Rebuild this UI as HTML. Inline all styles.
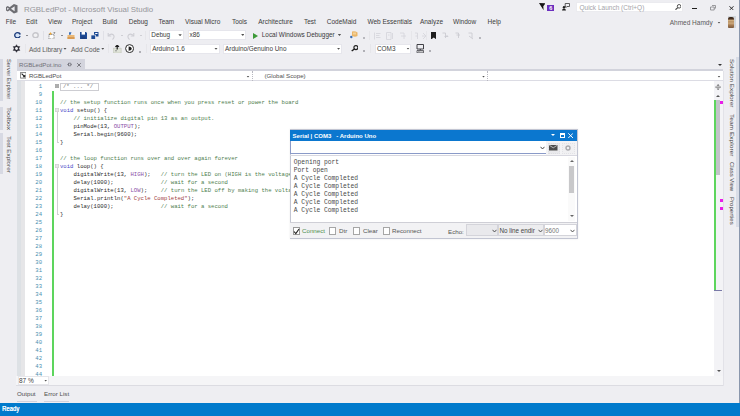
<!DOCTYPE html>
<html><head><meta charset="utf-8">
<style>
*{margin:0;padding:0;box-sizing:border-box}
html,body{width:740px;height:416px;overflow:hidden;background:#eeeef2;font-family:"Liberation Sans",sans-serif;position:relative}
.a{position:absolute}
.t{position:absolute;white-space:pre;line-height:1}
.menu{font-size:6.5px;color:#3c3c3c;top:19px}
.combo{position:absolute;background:#fff;border:1px solid #e6e6ec}
.dd{position:absolute;width:3.4px;height:2px;background:#505050;clip-path:polygon(0 0,100% 0,50% 100%)}
.vt{position:absolute;white-space:pre;line-height:1;font-size:5.8px;color:#484848;transform-origin:0 0;transform:rotate(90deg)}
.code{position:absolute;left:60px;font-family:"Liberation Mono",monospace;font-size:5.6px;line-height:8px;white-space:pre;color:#2a2a2a}
.ln{position:absolute;left:25px;width:17px;text-align:right;font-family:"Liberation Mono",monospace;font-size:5.6px;line-height:8px;color:#4a8fb0}
.c{color:#4d7d4d}.k{color:#4a4ac8}.s{color:#a04040}.m{color:#8a50a8}
</style></head><body>

<!-- title bar -->
<svg class="a" style="left:6px;top:4px" width="11.5" height="9.5" viewBox="0 0 16 16" preserveAspectRatio="none"><path d="M11 0 L16 2 V14 L11 16 L5 10.5 L2.5 12.5 L0 11 V5 L2.5 3.5 L5 5.5 Z M12 3.6 V12.4 L6.9 8 Z M1.6 5.8 V10.2 L4.2 8 Z" fill="#6e6e73" fill-rule="evenodd"/></svg>
<div class="t" style="left:24px;top:5.5px;font-size:7.9px;color:#96969b">RGBLedPot - Microsoft Visual Studio</div>

<!-- menu -->
<div class="t menu" style="left:5.7px">File</div>
<div class="t menu" style="left:26px">Edit</div>
<div class="t menu" style="left:48px">View</div>
<div class="t menu" style="left:72px">Project</div>
<div class="t menu" style="left:102.6px">Build</div>
<div class="t menu" style="left:128.8px">Debug</div>
<div class="t menu" style="left:158.4px">Team</div>
<div class="t menu" style="left:185px">Visual Micro</div>
<div class="t menu" style="left:231.9px">Tools</div>
<div class="t menu" style="left:258.2px">Architecture</div>
<div class="t menu" style="left:304px">Test</div>
<div class="t menu" style="left:326.8px">CodeMaid</div>
<div class="t menu" style="left:367.4px">Web Essentials</div>
<div class="t menu" style="left:419.9px">Analyze</div>
<div class="t menu" style="left:453px">Window</div>
<div class="t menu" style="left:487.6px">Help</div>


<!-- title right -->
<svg class="a" style="left:538.8px;top:3.2px" width="6.5" height="7.5" viewBox="0 0 6.5 7.5"><path d="M0 0 L6.5 0.4 L4.3 3.2 L4.6 7.3 L2.2 3.6 Z" fill="#141414"/></svg>
<div class="a" style="left:547px;top:4.9px;width:7.3px;height:6.5px;background:#6b2fbf"></div>
<div class="t" style="left:549.2px;top:5.6px;font-size:5.5px;color:#fff;font-weight:bold">6</div>
<svg class="a" style="left:562.4px;top:3.2px" width="8" height="7.5" viewBox="0 0 8 7.5"><path d="M3.2 0.5 H7.5 V3.5 H5 L4 4.5 V3.5 H3.2 Z" fill="none" stroke="#3a3a3a" stroke-width="0.8"/><circle cx="2" cy="4.2" r="1.2" fill="#1e1e1e"/><path d="M0 7.5 Q0.3 5.6 2 5.6 Q3.7 5.6 4 7.5 Z" fill="#1e1e1e"/></svg>
<div class="a" style="left:575.8px;top:1.6px;width:107.4px;height:10.6px;background:#fff;border:1px solid #ebebef"></div>
<div class="t" style="left:579.5px;top:5px;font-size:6.5px;color:#a4a4a9">Quick Launch (Ctrl+Q)</div>
<svg class="a" style="left:674.6px;top:3.8px" width="6.5" height="6" viewBox="0 0 6.5 6"><circle cx="4.1" cy="2.3" r="1.8" fill="none" stroke="#424242" stroke-width="0.9"/><path d="M2.8 3.6 L0.5 5.6" stroke="#424242" stroke-width="1.2"/></svg>
<div class="a" style="left:691.9px;top:7.7px;width:5px;height:1.8px;background:#1e1e1e"></div>
<svg class="a" style="left:709.5px;top:5px" width="6" height="5.5" viewBox="0 0 6 5.5"><path d="M2 0.5 H5.5 V3.2 H4.2 M0.5 2 H4.2 V5 H0.5 Z" fill="none" stroke="#8a8a8e" stroke-width="0.85"/></svg>
<svg class="a" style="left:728.6px;top:5.5px" width="5" height="4.5" viewBox="0 0 5 4.5"><path d="M0.3 0.2 L4.7 4.3 M4.7 0.2 L0.3 4.3" stroke="#1e1e1e" stroke-width="0.9"/></svg>
<div class="t" style="left:669.7px;top:19.8px;font-size:6.5px;color:#5a5a5a">Ahmed Hamdy</div>
<div class="dd" style="left:717.3px;top:21.5px"></div>
<div class="a" style="left:727.8px;top:16.3px;width:8.2px;height:11.5px;background:#d3d7dc"></div>
<div class="a" style="left:728.3px;top:17px;width:5.8px;height:10.8px;background:linear-gradient(#3a2818 0,#4a3020 18%,#d2b080 30%,#b58d60 45%,#d0ad80 55%,#a47a50 75%,#7a5a40 100%);border-radius:2px 2px 1px 1px"></div>
<div class="a" style="left:738.7px;top:0;width:1.3px;height:403px;background:#8a97ad"></div>

<!-- toolbar row 1 -->
<svg class="a" style="left:13.7px;top:31.6px" width="7.2" height="6.6" viewBox="0 0 7.2 6.6"><ellipse cx="3.5" cy="3.3" rx="2.8" ry="2.6" fill="#d6e4f8" stroke="#1a3a7a" stroke-width="1.3"/><path d="M4.4 3.3 L7.2 2.1 V4.5 Z" fill="#e4ecf8"/></svg>
<div class="a" style="left:25.5px;top:35px;width:2px;height:1.3px;background:#8a8a90"></div>
<svg class="a" style="left:32px;top:31.6px" width="7" height="6.6" viewBox="0 0 7 6.6"><ellipse cx="3.5" cy="3.3" rx="2.7" ry="2.5" fill="#f2f2f4" stroke="#c6c6cb" stroke-width="1.4"/></svg>
<div class="a" style="left:43px;top:31px;width:1px;height:9px;background:#e0e0e6"></div>
<svg class="a" style="left:48px;top:31.5px" width="8" height="7.5" viewBox="0 0 8 7.5"><path d="M1 2.5 H6 V7 H1 Z" fill="#fff" stroke="#666" stroke-width="0.8" stroke-dasharray="1 0.8"/><path d="M2.5 0 L3.2 1.3 L4.5 1.5 L3.2 2 L2.5 3.3 L1.8 2 L0.5 1.5 L1.8 1.3 Z" fill="#e9a63a"/><path d="M5.5 0.5 L7 0.5 L6 2" stroke="#777" stroke-width="0.7" fill="none"/></svg>
<div class="a" style="left:60.5px;top:35px;width:2px;height:1.3px;background:#8a8a90"></div>
<svg class="a" style="left:66.5px;top:31.5px" width="8" height="7.5" viewBox="0 0 8 7.5"><path d="M0.5 3 H7.5 V7.5 H0.5 Z" fill="#e9b877"/><path d="M2 0.3 L4.5 0.3 L3.5 2.8 L2 2.8 Z" fill="#3a6fb5"/><path d="M0.5 5 H7.5 V7.5 H0.5 Z" fill="#d99c55"/></svg>
<svg class="a" style="left:79.5px;top:32px" width="7" height="7" viewBox="0 0 7 7"><path d="M0 0 H6 L7 1 V7 H0 Z" fill="#1d4a94"/><path d="M1.6 0 H5 V2.6 H1.6 Z" fill="#fff"/><path d="M1.5 4.5 H5.5 V7 H1.5 Z" fill="#1d3f80"/></svg>
<svg class="a" style="left:91px;top:31.5px" width="7.5" height="7.5" viewBox="0 0 7.5 7.5"><path d="M3 0 H7.5 V4.5 H3 Z" fill="#1d4a94"/><path d="M0 3 H4.5 V7.5 H0 Z" fill="#1d4a94" stroke="#eeeef2" stroke-width="0.7"/><path d="M4.2 1 H6.5 V2 H4.2 Z" fill="#fff"/></svg>
<div class="a" style="left:103px;top:31px;width:1px;height:9px;background:#e0e0e6"></div>
<svg class="a" style="left:107px;top:31.5px" width="8" height="8" viewBox="0 0 8 8"><path d="M1.2 1 V4 H4.2" stroke="#cdcdd3" stroke-width="1.1" fill="none"/><path d="M1.5 3.8 Q4 1 6.5 3 Q8 5.5 5.5 7.5" stroke="#cdcdd3" stroke-width="1.1" fill="none"/></svg>
<div class="a" style="left:120.5px;top:35px;width:2px;height:1.3px;background:#cfcfd4"></div>
<svg class="a" style="left:127px;top:31.5px" width="8" height="8" viewBox="0 0 8 8"><path d="M6.8 1 V4 H3.8" stroke="#cdcdd3" stroke-width="1.1" fill="none"/><path d="M6.5 3.8 Q4 1 1.5 3 Q0 5.5 2.5 7.5" stroke="#cdcdd3" stroke-width="1.1" fill="none"/></svg>
<div class="a" style="left:139.5px;top:35px;width:2px;height:1.3px;background:#cfcfd4"></div>
<div class="a" style="left:145px;top:31px;width:1px;height:9px;background:#e6e6ea"></div>
<div class="combo" style="left:149px;top:29.7px;width:35px;height:10.2px"></div>
<div class="t" style="left:151.3px;top:32px;font-size:6.4px;color:#3a3a3a">Debug</div>
<div class="dd" style="left:178.4px;top:34.3px"></div>
<div class="combo" style="left:187.8px;top:29.7px;width:58.6px;height:10.2px"></div>
<div class="t" style="left:189.5px;top:32px;font-size:6.4px;color:#3a3a3a">x86</div>
<div class="dd" style="left:241.1px;top:34px"></div>
<svg class="a" style="left:252.5px;top:32.5px" width="5" height="6" viewBox="0 0 5 6"><path d="M0 0 L5 3 L0 6 Z" fill="#3c9a38"/></svg>
<div class="t" style="left:261.8px;top:32px;font-size:6.4px;color:#3a3a3a">Local Windows Debugger</div>
<div class="dd" style="left:337.8px;top:34px"></div>
<svg class="a" style="left:349.5px;top:31.2px" width="8" height="7.5" viewBox="0 0 8 7.5"><path d="M2 0.5 Q5 -0.5 7.5 1.5 V5 Q5 6.5 2 5 Z" fill="#eab66a"/><path d="M3 1.5 H6 V3.5 H3 Z" fill="#f3d29a"/><circle cx="1.3" cy="6" r="1.2" fill="#3a6fb5"/></svg>
<div class="a" style="left:362.5px;top:37.4px;width:2px;height:1.6px;background:#b8b8be"></div>
<div class="a" style="left:369px;top:31px;width:1px;height:9px;background:#e6e6ea"></div>
<svg class="a" style="left:373.5px;top:31.5px" width="34" height="8" viewBox="0 0 34 8"><path d="M0.5 0.5 V7.5 M2 1.5 H6.5 M2 3.5 H5.5 M2 5.5 H6.5 M12.5 0.5 H17 V7.5 H12.5 Z M18.5 1 V7 M14 3 H15.5 M26 1 H30 V7 M27 4 H32" stroke="#d6d6dc" stroke-width="0.9" fill="none"/></svg>
<div class="a" style="left:410.5px;top:31px;width:1px;height:9px;background:#e6e6ea"></div>
<svg class="a" style="left:414px;top:31.5px" width="14" height="8" viewBox="0 0 14 8"><path d="M1 1 H3.5 V7 M1.5 4 H3.5 M9 1 L12 4 L9 7 M8 4 H11" stroke="#d6d6dc" stroke-width="0.9" fill="none"/></svg>
<div class="a" style="left:426px;top:31px;width:1px;height:9px;background:#e6e6ea"></div>
<svg class="a" style="left:430.5px;top:31.5px" width="5.5" height="7.5" viewBox="0 0 5.5 7.5"><path d="M0 0 H5.5 V7.5 L2.75 5.5 L0 7.5 Z" fill="#1e1e1e"/></svg>
<svg class="a" style="left:442px;top:31.5px" width="34" height="8" viewBox="0 0 34 8"><path d="M0.5 1 H3.5 V6 M2.5 4.5 L6 4.5 L4.5 3 M13.5 1 H16.5 V6 M14.5 3 H18 M26.5 1 H30 V6 M27 4 L31 7" stroke="#cbcbd1" stroke-width="0.9" fill="none"/></svg>
<div class="a" style="left:478.5px;top:37.4px;width:2px;height:1.6px;background:#b8b8be"></div>

<!-- toolbar row 2 -->
<svg class="a" style="left:12px;top:44.2px" width="9" height="9" viewBox="0 0 9 9"><path d="M4.5 0.7 L7.8 6.4 H1.2 Z M4.5 8.3 L1.2 2.6 H7.8 Z" fill="#2a2a35" stroke="#2a2a35" stroke-width="0.5" stroke-linejoin="round"/><circle cx="4.5" cy="4.5" r="1.4" fill="#f4f4f7"/></svg>
<div class="a" style="left:24.5px;top:44px;width:1px;height:9px;background:#e6e6ea"></div>
<div class="t" style="left:29px;top:46.5px;font-size:6.5px;color:#595959">Add Library</div>
<div class="dd" style="left:63.3px;top:47.8px"></div>
<div class="t" style="left:71px;top:46.5px;font-size:6.5px;color:#595959">Add Code</div>
<div class="dd" style="left:101.1px;top:47.8px"></div>
<div class="a" style="left:108px;top:44px;width:1px;height:9px;background:#e6e6ea"></div>
<svg class="a" style="left:113.2px;top:44.8px" width="8.5" height="8" viewBox="0 0 8.5 8"><path d="M0.3 3.2 H8.2 V8 H0.3 Z" fill="#dfe3d8" stroke="#b8bdb0" stroke-width="0.5"/><path d="M4.2 0 V4.5 M2.4 1.9 L4.2 0.2 L6 1.9" stroke="#1e1e1e" stroke-width="1.2" fill="none"/><circle cx="3" cy="5.8" r="0.8" fill="#888"/></svg>
<svg class="a" style="left:124.7px;top:44px" width="9.2" height="9.2" viewBox="0 0 9.2 9.2"><circle cx="4.6" cy="4.6" r="4" fill="#fff" stroke="#2a2a2a" stroke-width="1"/><path d="M3.6 2.4 Q6.8 2.8 6.8 4.6 Q6.8 6.4 3.6 6.8 Z" fill="#1e1e1e"/></svg>
<div class="a" style="left:138.5px;top:51px;width:2px;height:1.6px;background:#b0b0b6"></div>
<div class="a" style="left:145.5px;top:44px;width:1px;height:9px;background:#e6e6ea"></div>
<div class="combo" style="left:150px;top:44.2px;width:69.5px;height:9.8px"></div>
<div class="t" style="left:152.2px;top:46.3px;font-size:6.4px;color:#3a3a3a">Arduino 1.6</div>
<div class="dd" style="left:214.3px;top:47.8px"></div>
<div class="combo" style="left:223px;top:44.2px;width:119px;height:9.8px"></div>
<div class="t" style="left:225px;top:46.3px;font-size:6.4px;color:#3a3a3a">Arduino/Genuino Uno</div>
<div class="dd" style="left:336.9px;top:47.8px"></div>
<svg class="a" style="left:350.9px;top:45.2px" width="7.5" height="6.5" viewBox="0 0 7.5 6.5"><circle cx="4.9" cy="2.6" r="2" fill="none" stroke="#1e1e1e" stroke-width="1.1"/><path d="M3.4 4 L0.7 6" stroke="#1e1e1e" stroke-width="1.5"/></svg>
<div class="a" style="left:362.8px;top:50.3px;width:2px;height:1.6px;background:#b0b0b6"></div>
<div class="a" style="left:370px;top:44px;width:1px;height:9px;background:#e6e6ea"></div>
<div class="combo" style="left:375px;top:44.2px;width:36px;height:9.8px"></div>
<div class="t" style="left:377px;top:46.3px;font-size:6.4px;color:#3a3a3a">COM3</div>
<div class="dd" style="left:406.3px;top:47.6px"></div>
<svg class="a" style="left:416px;top:44px" width="8.5" height="9" viewBox="0 0 8.5 9"><path d="M1 0.5 H7.5 V5 H1 Z" fill="none" stroke="#2d2d33" stroke-width="0.9"/><path d="M4.25 5 V6.3" stroke="#2d2d33" stroke-width="0.9"/><path d="M1 6.5 H7.5 V8.8 H1 Z" fill="#fff" stroke="#2d2d33" stroke-width="0.7"/><path d="M2 7.6 H6.5" stroke="#2d2d33" stroke-width="0.6" stroke-dasharray="0.8 0.5"/></svg>
<div class="a" style="left:428.8px;top:50.3px;width:2px;height:1.6px;background:#b0b0b6"></div>

<!-- left tab strip -->
<div class="a" style="left:0;top:59px;width:3px;height:42px;background:#d7d9e3"></div>
<div class="a" style="left:0;top:107px;width:3px;height:22.6px;background:#d7d9e3"></div>
<div class="a" style="left:0;top:133px;width:3px;height:41px;background:#d7d9e3"></div>
<div class="vt" style="left:11.1px;top:59px;transform:rotate(90deg) scaleX(1.0)">Server Explorer</div>
<div class="vt" style="left:11.1px;top:107.3px;transform:rotate(90deg) scaleX(1.155)">Toolbox</div>
<div class="vt" style="left:11.1px;top:136.4px;transform:rotate(90deg) scaleX(1.087)">Test Explorer</div>

<!-- right tab strip -->
<div class="a" style="left:735.5px;top:57px;width:3px;height:170px;background:#d9dde7"></div>
<div class="vt" style="left:734.3px;top:58.6px;transform:rotate(90deg) scaleX(1.096)">Solution Explorer</div>
<div class="vt" style="left:734.3px;top:113.7px;transform:rotate(90deg) scaleX(1.136)">Team Explorer</div>
<div class="vt" style="left:734.3px;top:161.6px;transform:rotate(90deg) scaleX(1.015)">Class View</div>
<div class="vt" style="left:734.3px;top:197.3px;transform:rotate(90deg) scaleX(1.048)">Properties</div>

<!-- document tab well -->
<div class="a" style="left:17px;top:59px;width:68px;height:10px;background:#d3d4dd"></div>
<div class="t" style="left:19px;top:62px;font-size:6.1px;color:#707078">RGBLedPot.ino</div>
<svg class="a" style="left:67.3px;top:62.3px" width="5" height="5" viewBox="0 0 5 5"><path d="M0.3 2.5 H1.5 M1.5 1 V4 M1.5 1.2 H3.8 V3.8 H1.5 M3.8 2.5 H4.8" stroke="#707078" stroke-width="0.8" fill="none"/></svg>
<svg class="a" style="left:77px;top:62.5px" width="4" height="4" viewBox="0 0 4 4"><path d="M0.2 0.2 L3.8 3.8 M3.8 0.2 L0.2 3.8" stroke="#6d6d73" stroke-width="0.9"/></svg>
<div class="a" style="left:717.5px;top:63.5px;width:0;height:0;border-left:2px solid transparent;border-right:2px solid transparent;border-top:2.2px solid #333"></div>
<div class="a" style="left:17px;top:69px;width:706px;height:1.6px;background:#d2d3dc"></div>

<!-- navigation bar -->
<div class="a" style="left:17px;top:71px;width:705.5px;height:10.3px;background:#fff;border-bottom:1px solid #dcdce4"></div>
<svg class="a" style="left:19.7px;top:72.4px" width="6.5" height="6.5" viewBox="0 0 6.5 6.5"><path d="M0.4 0.4 H6.1 V6.1 H0.4 Z" fill="#fff" stroke="#666" stroke-width="0.8"/><path d="M1.6 1.6 L4.4 4.4" stroke="#1e1e1e" stroke-width="1.1"/><path d="M3.2 4.8 H4.9 V3.1" stroke="#1e1e1e" stroke-width="1"/></svg>
<div class="t" style="left:28.9px;top:73.4px;font-size:6.1px;color:#505050">RGBLedPot</div>
<div class="dd" style="left:246.3px;top:75.5px"></div>
<div class="a" style="left:251.5px;top:71px;width:1px;height:10px;border-left:1px dotted #b8b8c0"></div>
<div class="t" style="left:264.4px;top:73.4px;font-size:6.2px;color:#505050">(Global Scope)</div>
<div class="dd" style="left:481.8px;top:75.5px"></div>
<div class="a" style="left:486.5px;top:71px;width:1px;height:10px;border-left:1px dotted #b8b8c0"></div>
<div class="dd" style="left:717.3px;top:75.5px"></div>

<!-- editor -->
<div class="a" style="left:16px;top:81px;width:698px;height:295px;background:#fff"></div>
<div class="a" style="left:16px;top:81px;width:1px;height:304px;background:#eeeef2"></div>
<div class="a" style="left:17px;top:81px;width:3.5px;height:295px;background:#dde1e5"></div>
<div class="a" style="left:20.5px;top:81px;width:4.8px;height:295px;background:#e6e6e8"></div>
<div class="ln" style="top:83px">1<br>9<br>10<br>11<br>12<br>13<br>14<br>15<br>16<br>17<br>18<br>19<br>20<br>21<br>22<br>23<br>24<br>25<br>26<br>27<br>28<br>29<br>30<br>31<br>32<br>33<br>34<br>35<br>36<br>37<br>38<br>39<br>40<br>41<br>42<br>43<br>44</div>
<div class="a" style="left:52px;top:90.5px;width:2px;height:285.5px;background:#5dd55d"></div>
<svg class="a" style="left:55.3px;top:84px" width="4" height="4" viewBox="0 0 4 4"><path d="M0.35 0.35 H3.65 V3.65 H0.35 Z M1 2 H3 M2 1 V3" stroke="#6a6a6a" stroke-width="0.65" fill="#fff"/></svg>
<div class="a" style="left:60.2px;top:82.8px;width:38.7px;height:7.8px;border:1px solid #cdcdd2"></div>
<div class="t" style="left:63px;top:84px;font-family:'Liberation Mono',monospace;font-size:5.6px;color:#777">/* ... */</div>
<svg class="a" style="left:55.3px;top:108px" width="4" height="4" viewBox="0 0 4 4"><path d="M0.35 0.35 H3.65 V3.65 H0.35 Z M1 2 H3" stroke="#b0b0b0" stroke-width="0.6" fill="#fff"/></svg>
<div class="a" style="left:57px;top:112px;width:2px;height:30.5px;border-left:1px solid #d0d0d4;border-bottom:1px solid #d0d0d4"></div>
<svg class="a" style="left:55.3px;top:164px" width="4" height="4" viewBox="0 0 4 4"><path d="M0.35 0.35 H3.65 V3.65 H0.35 Z M1 2 H3" stroke="#b0b0b0" stroke-width="0.6" fill="#fff"/></svg>
<div class="a" style="left:57px;top:168px;width:2px;height:46.5px;border-left:1px solid #d0d0d4;border-bottom:1px solid #d0d0d4"></div>
<div class="code" style="top:83px">

<span class="c">// the setup function runs once when you press reset or power the board</span>
<span class="k">void</span> setup() {
    <span class="c">// initialize digital pin 13 as an output.</span>
    pinMode(13, <span class="m">OUTPUT</span>);
    Serial.begin(9600);
}

<span class="c">// the loop function runs over and over again forever</span>
<span class="k">void</span> loop() {
    digitalWrite(13, <span class="m">HIGH</span>);   <span class="c">// turn the LED on (HIGH is the voltage level)</span>
    delay(1000);              <span class="c">// wait for a second</span>
    digitalWrite(13, <span class="m">LOW</span>);    <span class="c">// turn the LED off by making the voltage LOW</span>
    Serial.println(<span class="s">"A Cycle Completed"</span>);
    delay(1000);              <span class="c">// wait for a second</span>
}</div>

<!-- vertical scrollbar -->
<div class="a" style="left:713.5px;top:81.3px;width:9px;height:294.7px;background:#f3f3f6"></div>
<div class="a" style="left:722.5px;top:71px;width:1px;height:315px;background:#e2e2e8"></div>
<svg class="a" style="left:715px;top:83.8px" width="6.2" height="6.2" viewBox="0 0 6.2 6.2"><path d="M3.1 0 L4.6 1.8 H1.6 Z M3.1 6.2 L4.6 4.4 H1.6 Z" fill="#6a6a6a"/><path d="M0.3 3.1 H5.9" stroke="#6a6a6a" stroke-width="1"/></svg>
<div class="a" style="left:716px;top:94.9px;width:0;height:0;border-left:2px solid transparent;border-right:2px solid transparent;border-bottom:2.2px solid #555"></div>
<div class="a" style="left:714px;top:100.3px;width:2px;height:190px;background:#5dd55d"></div>
<div class="a" style="left:716px;top:100.3px;width:4.3px;height:74.7px;background:#c2c3c9"></div>
<div class="a" style="left:714px;top:290px;width:8px;height:1px;background:#7a7aa8"></div>
<div class="a" style="left:720px;top:100.5px;width:3px;height:3px;background:#e81ee8"></div>
<div class="a" style="left:720px;top:199px;width:3px;height:3px;background:#e81ee8"></div>
<div class="a" style="left:720px;top:207px;width:3px;height:3px;background:#e81ee8"></div>
<div class="a" style="left:716.5px;top:370px;width:0;height:0;border-left:2px solid transparent;border-right:2px solid transparent;border-top:2px solid #555"></div>

<!-- horizontal area -->
<div class="a" style="left:16px;top:376px;width:707px;height:9px;background:#f5f5f7"></div>
<div class="a" style="left:16px;top:385px;width:707px;height:1px;background:#dcdce2"></div>
<div class="a" style="left:17.5px;top:376px;width:31.5px;height:9px;background:#fff;border:1px solid #e6e6ea"></div>
<div class="t" style="left:19px;top:378px;font-size:6.5px;color:#444">87 %</div>
<div class="dd" style="left:44px;top:379.5px"></div>

<!-- output tabs -->
<div class="t" style="left:17px;top:390.8px;font-size:6.2px;color:#505050">Output</div>
<div class="a" style="left:17px;top:400.6px;width:20px;height:1px;background:#d0d2dc"></div>
<div class="t" style="left:44px;top:390.8px;font-size:6.2px;color:#505050">Error List</div>
<div class="a" style="left:44px;top:400.6px;width:25px;height:1px;background:#d0d2dc"></div>


<!-- serial monitor window -->
<div class="a" style="left:289.5px;top:128.8px;width:288px;height:110px;background:#fff;border:1px solid #c2c5d2;box-shadow:0 0 2px rgba(0,0,0,0.08)"></div>
<div class="a" style="left:290px;top:130px;width:287px;height:11px;background:#0b77cf"></div>
<div class="t" style="left:292.6px;top:133px;font-size:6px;font-weight:bold;color:#fff">Serial | COM3   - Arduino Uno</div>
<div class="a" style="left:551px;top:134.3px;width:0;height:0;border-left:2px solid transparent;border-right:2px solid transparent;border-top:2.3px solid #fff"></div>
<div class="a" style="left:559.5px;top:133px;width:5px;height:5.2px;border:1px solid #fff;border-top-width:2px"></div>
<svg class="a" style="left:568.2px;top:133px" width="5.3" height="5.3" viewBox="0 0 5.3 5.3"><path d="M0.3 0.3 L5 5 M5 0.3 L0.3 5" stroke="#fff" stroke-width="0.95"/></svg>
<!-- input row -->
<div class="a" style="left:290px;top:141px;width:256px;height:13px;background:#fff;border-bottom:1px solid #8a9ac8;border-left:1px solid #8a9ac8"></div>
<svg class="a" style="left:539.5px;top:145.5px" width="5" height="4" viewBox="0 0 5 4"><path d="M0.5 0.8 L2.5 3 L4.5 0.8" stroke="#333" stroke-width="0.9" fill="none"/></svg>
<div class="a" style="left:546px;top:141px;width:30.5px;height:14px;background:#f3f3f5"></div>
<div class="a" style="left:547.5px;top:142.5px;width:12.5px;height:11px;background:#e9e9ec;border:1px dotted #dedee2"></div>
<div class="a" style="left:561.5px;top:142.5px;width:13px;height:11px;background:#f0f0f2;border:1px dotted #e2e2e6"></div>
<svg class="a" style="left:549.3px;top:145px" width="8.5" height="5.5" viewBox="0 0 8.5 5.5"><path d="M0 0 H8.5 V5.5 H0 Z" fill="#4a4a4a"/><path d="M0.3 0.3 L4.25 2.8 L8.2 0.3" stroke="#cfcfcf" stroke-width="0.8" fill="none"/></svg>
<svg class="a" style="left:565px;top:145px" width="6" height="6" viewBox="0 0 6 6"><circle cx="3" cy="3" r="2" fill="none" stroke="#a8a8ac" stroke-width="1.4"/></svg>
<div class="a" style="left:290px;top:155px;width:287px;height:0.8px;background:#d8d8e0"></div>
<!-- output text -->
<div class="t" style="left:293.8px;top:159.8px;font-family:'Liberation Mono',monospace;font-size:6.3px;color:#484848">Opening port</div>
<div class="t" style="left:293.8px;top:167.9px;font-family:'Liberation Mono',monospace;font-size:6.3px;color:#484848">Port open</div>
<div class="t" style="left:293.8px;top:175.5px;font-family:'Liberation Mono',monospace;font-size:6.3px;color:#484848">A Cycle Completed</div>
<div class="t" style="left:293.8px;top:183.6px;font-family:'Liberation Mono',monospace;font-size:6.3px;color:#484848">A Cycle Completed</div>
<div class="t" style="left:293.8px;top:191.7px;font-family:'Liberation Mono',monospace;font-size:6.3px;color:#484848">A Cycle Completed</div>
<div class="t" style="left:293.8px;top:199.8px;font-family:'Liberation Mono',monospace;font-size:6.3px;color:#484848">A Cycle Completed</div>
<div class="t" style="left:293.8px;top:207.9px;font-family:'Liberation Mono',monospace;font-size:6.3px;color:#484848">A Cycle Completed</div>

<!-- output scrollbar -->
<div class="a" style="left:568px;top:157px;width:7px;height:64px;background:#fafafa"></div>
<div class="a" style="left:569.5px;top:159.5px;width:0;height:0;border-left:2px solid transparent;border-right:2px solid transparent;border-bottom:2px solid #666"></div>
<div class="a" style="left:569px;top:166px;width:5px;height:27px;background:#c8c8ca"></div>
<div class="a" style="left:569.5px;top:215px;width:0;height:0;border-left:2px solid transparent;border-right:2px solid transparent;border-top:2px solid #666"></div>
<!-- bottom bar -->
<div class="a" style="left:290px;top:221.5px;width:287px;height:16.5px;background:#f2f2f4;border-top:1px solid #cfcfd6"></div>
<div class="a" style="left:292.5px;top:227px;width:7px;height:7.5px;background:#fff;border:1px solid #9a9a9a"></div>
<svg class="a" style="left:293px;top:227.5px" width="7" height="7" viewBox="0 0 7 7"><path d="M1 3.5 L2.8 5.5 L6 1" stroke="#1e1e1e" stroke-width="1.1" fill="none"/></svg>
<div class="t" style="left:302px;top:228px;font-size:6.2px;color:#4f8f4f">Connect</div>
<div class="a" style="left:329px;top:227px;width:7px;height:7.5px;background:#fff;border:1px solid #a6a6a6"></div>
<div class="t" style="left:339px;top:228px;font-size:6.2px;color:#555">Dtr</div>
<div class="a" style="left:353px;top:227px;width:7px;height:7.5px;background:#fff;border:1px solid #a6a6a6"></div>
<div class="t" style="left:363px;top:228px;font-size:6.2px;color:#555">Clear</div>
<div class="a" style="left:382.5px;top:227px;width:7px;height:7.5px;background:#fff;border:1px solid #a6a6a6"></div>
<div class="t" style="left:392px;top:228px;font-size:6.2px;color:#555">Reconnect</div>
<div class="t" style="left:448px;top:228.5px;font-size:6.2px;color:#555">Echo:</div>
<div class="a" style="left:466px;top:224px;width:32px;height:12px;background:#e9e9ec;border:1px solid #d4d4da"></div>
<svg class="a" style="left:492px;top:228.5px" width="5" height="4" viewBox="0 0 5 4"><path d="M0.5 0.8 L2.5 3 L4.5 0.8" stroke="#444" stroke-width="0.9" fill="none"/></svg>
<div class="a" style="left:498px;top:224px;width:46px;height:12px;background:#ededef;border:1px solid #d4d4da"></div>
<div class="t" style="left:499.5px;top:228px;font-size:6.3px;color:#444">No line endir</div>
<svg class="a" style="left:537.5px;top:228.5px" width="5" height="4" viewBox="0 0 5 4"><path d="M0.5 0.8 L2.5 3 L4.5 0.8" stroke="#444" stroke-width="0.9" fill="none"/></svg>
<div class="a" style="left:543.5px;top:224px;width:33px;height:12px;background:#fff;border:1px solid #d4d4da"></div>
<div class="t" style="left:545px;top:228px;font-size:6.3px;color:#777">9600</div>
<svg class="a" style="left:570px;top:228.5px" width="5" height="4" viewBox="0 0 5 4"><path d="M0.5 0.8 L2.5 3 L4.5 0.8" stroke="#444" stroke-width="0.9" fill="none"/></svg>

<!-- status bar -->
<div class="a" style="left:0;top:403px;width:740px;height:13px;background:#007acc"></div>
<div class="t" style="left:2.2px;top:405.8px;font-size:6.6px;color:#fff;transform-origin:0 0;transform:scaleX(0.9);text-shadow:0.25px 0 0 #fff">Ready</div>

</body></html>
